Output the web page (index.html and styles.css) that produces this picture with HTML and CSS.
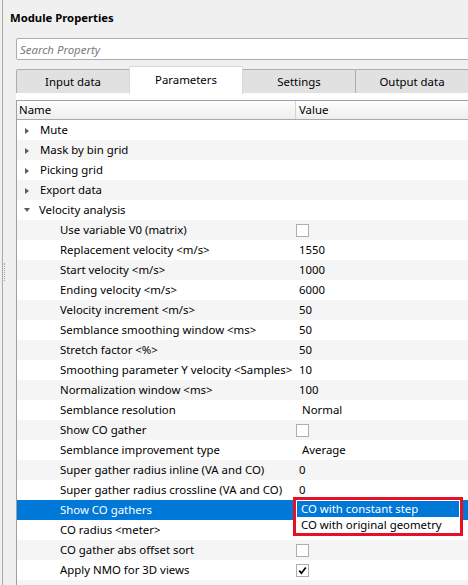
FILE: index.html
```html
<!DOCTYPE html>
<html lang="en">
<head>
  <meta charset="UTF-8" />
  <title>Module Properties</title>
  <link rel="stylesheet" href="styles.css">
</head>
<body>
  <div class="panel">
    <div class="grip"></div>
    <h1 class="title">Module Properties</h1>
    <div class="search">Search Property</div>

    <div class="tabs">
      <div class="tab">Input data</div>
      <div class="tab active">Parameters</div>
      <div class="tab">Settings</div>
      <div class="tab">Output data</div>
    </div>

    <div class="pane">
      <div class="grid">
        <div class="head">
          <div class="h-name">Name</div>
          <div class="h-value">Value</div>
        </div>

        <div class="rows">
          <div class="row group"><div class="name"><span class="arrow"></span>Mute</div><div class="value"></div></div>
          <div class="row group"><div class="name"><span class="arrow"></span>Mask by bin grid</div><div class="value"></div></div>
          <div class="row group"><div class="name"><span class="arrow"></span>Picking grid</div><div class="value"></div></div>
          <div class="row group"><div class="name"><span class="arrow"></span>Export data</div><div class="value"></div></div>
          <div class="row group open"><div class="name"><span class="arrow"></span>Velocity analysis</div><div class="value"></div></div>
          <div class="row"><div class="name">Use variable V0 (matrix)</div><div class="value"><span class="check"></span></div></div>
          <div class="row"><div class="name">Replacement velocity &lt;m/s&gt;</div><div class="value">1550</div></div>
          <div class="row"><div class="name">Start velocity &lt;m/s&gt;</div><div class="value">1000</div></div>
          <div class="row"><div class="name">Ending velocity &lt;m/s&gt;</div><div class="value">6000</div></div>
          <div class="row"><div class="name">Velocity increment &lt;m/s&gt;</div><div class="value">50</div></div>
          <div class="row"><div class="name">Semblance smoothing window &lt;ms&gt;</div><div class="value">50</div></div>
          <div class="row"><div class="name">Stretch factor &lt;%&gt;</div><div class="value">50</div></div>
          <div class="row"><div class="name">Smoothing parameter Y velocity &lt;Samples&gt;</div><div class="value">10</div></div>
          <div class="row"><div class="name">Normalization window &lt;ms&gt;</div><div class="value">100</div></div>
          <div class="row"><div class="name">Semblance resolution</div><div class="value combo">Normal</div></div>
          <div class="row"><div class="name">Show CO gather</div><div class="value"><span class="check"></span></div></div>
          <div class="row"><div class="name">Semblance improvement type</div><div class="value combo">Average</div></div>
          <div class="row"><div class="name">Super gather radius inline (VA and CO)</div><div class="value">0</div></div>
          <div class="row"><div class="name">Super gather radius crossline (VA and CO)</div><div class="value">0</div></div>
          <div class="row selected"><div class="name">Show CO gathers</div><div class="value"></div></div>
          <div class="row"><div class="name">CO radius &lt;meter&gt;</div><div class="value"></div></div>
          <div class="row"><div class="name">CO gather abs offset sort</div><div class="value"><span class="check"></span></div></div>
          <div class="row"><div class="name">Apply NMO for 3D views</div><div class="value"><span class="check on"><svg width="11" height="11" viewBox="0 0 11 11"><path d="M2.2 5.6 L4.4 8.2 L8.8 2.4" fill="none" stroke="#000" stroke-width="1.7"/></svg></span></div></div>
          <div class="row"><div class="name"></div><div class="value"></div></div>

          <!-- open combo list for "Show CO gathers" -->
          <div class="popup">
            <div class="item hot">CO with constant step</div>
            <div class="item">CO with original geometry</div>
          </div>
        </div>
      </div>
    </div>
  </div>
</body>
</html>
```

FILE: styles.css
```css
html, body {
  margin: 0;
  height: 100%;
}

body {
  font-family: "Segoe UI", "Noto Sans", sans-serif;
  font-size: 11.4px;
  color: #000;
  background: #f0f0f0;
  overflow: hidden;
}

.panel {
  position: relative;
  height: 100%;
  margin-left: 2px;
  border-left: 1px solid #a9a9a9;
  overflow: hidden;
}

/* splitter handle dots */
.grip {
  position: absolute;
  left: 1px;
  top: 263px;
  height: 18px;
  border-left: 1px dotted #a0a0a0;
}

.title {
  margin: 0;
  padding: 10px 0 0 7px;
  font-size: 11.3px;
  line-height: 16px;
  font-weight: bold;
}

.search {
  margin: 12px -20px 0 13px;
  height: 20px;
  line-height: 21px;
  padding-left: 3px;
  background: #fff;
  border: 1px solid #acacac;
  border-radius: 2px 0 0 2px;
  color: #7a7a7a;
  font-style: italic;
}

.tabs {
  display: flex;
  align-items: flex-end;
  height: 27px;
  margin: 6px 0 0 13px;
  position: relative;
  z-index: 1;
}

.tab {
  width: 112px;
  height: 23px;
  line-height: 23px;
  text-align: center;
  background: #e1e1e1;
  border: 1px solid #adadad;
  border-bottom: none;
  border-radius: 2px 2px 0 0;
  flex-shrink: 0;
}

.tab + .tab {
  margin-left: -1px;
}

.tab.active {
  height: 27px;
  line-height: 26px;
  background: #fff;
  border-color: #d9d9d9;
  margin-bottom: -1px;
  position: relative;
  z-index: 2;
}

.pane {
  margin-left: 13px;
  padding-top: 7px;
  background: #fff;
}

.grid {
  border-top: 1px solid #a0a0a0;
  border-left: 1px solid #a0a0a0;
}

.head {
  display: grid;
  grid-template-columns: 278px 1fr;
  height: 18px;
  line-height: 18px;
  background: linear-gradient(#fdfdfd, #eeeeee);
  border-bottom: 1px solid #a9a9a9;
}

.h-name {
  padding-left: 2px;
}

.h-value {
  padding-left: 3px;
  border-left: 1px solid #d5d5d5;
}

.rows {
  position: relative;
}

.row {
  display: grid;
  grid-template-columns: 278px 1fr;
  height: 20px;
  line-height: 20px;
  white-space: nowrap;
}

.row:nth-child(even) {
  background: #f5f5f5;
}

.row .name {
  padding-left: 43px;
  overflow: hidden;
}

.row.group .name {
  padding-left: 8px;
  display: flex;
  align-items: center;
}

.arrow {
  width: 0;
  height: 0;
  margin: 1px 11px 0 0;
  border-top: 3.5px solid transparent;
  border-bottom: 3.5px solid transparent;
  border-left: 4px solid #5c5c5c;
}

.row.open .arrow {
  margin: 0 9px 0 -1px;
  border-left: 3.5px solid transparent;
  border-right: 3.5px solid transparent;
  border-top: 4px solid #5c5c5c;
  border-bottom: none;
}

.row .value {
  padding-left: 4px;
  display: flex;
  align-items: center;
}

.row .value.combo {
  padding-left: 7px;
}

.check {
  width: 11px;
  height: 11px;
  margin: 0 0 0 -3px;
  background: #fff;
  border: 1px solid #adadad;
  display: flex;
}

.row.selected {
  background: #0078d7;
  color: #fff;
}

.popup {
  position: absolute;
  left: 276px;
  top: 377px;
  width: 162px;
  padding: 1px 1px 0;
  background: #fff;
  border: 3px solid #e81123;
}

.popup .item {
  height: 16px;
  line-height: 16px;
  padding-left: 4px;
  white-space: nowrap;
}

.popup .item.hot {
  background: #0078d7;
  color: #fff;
}
```
